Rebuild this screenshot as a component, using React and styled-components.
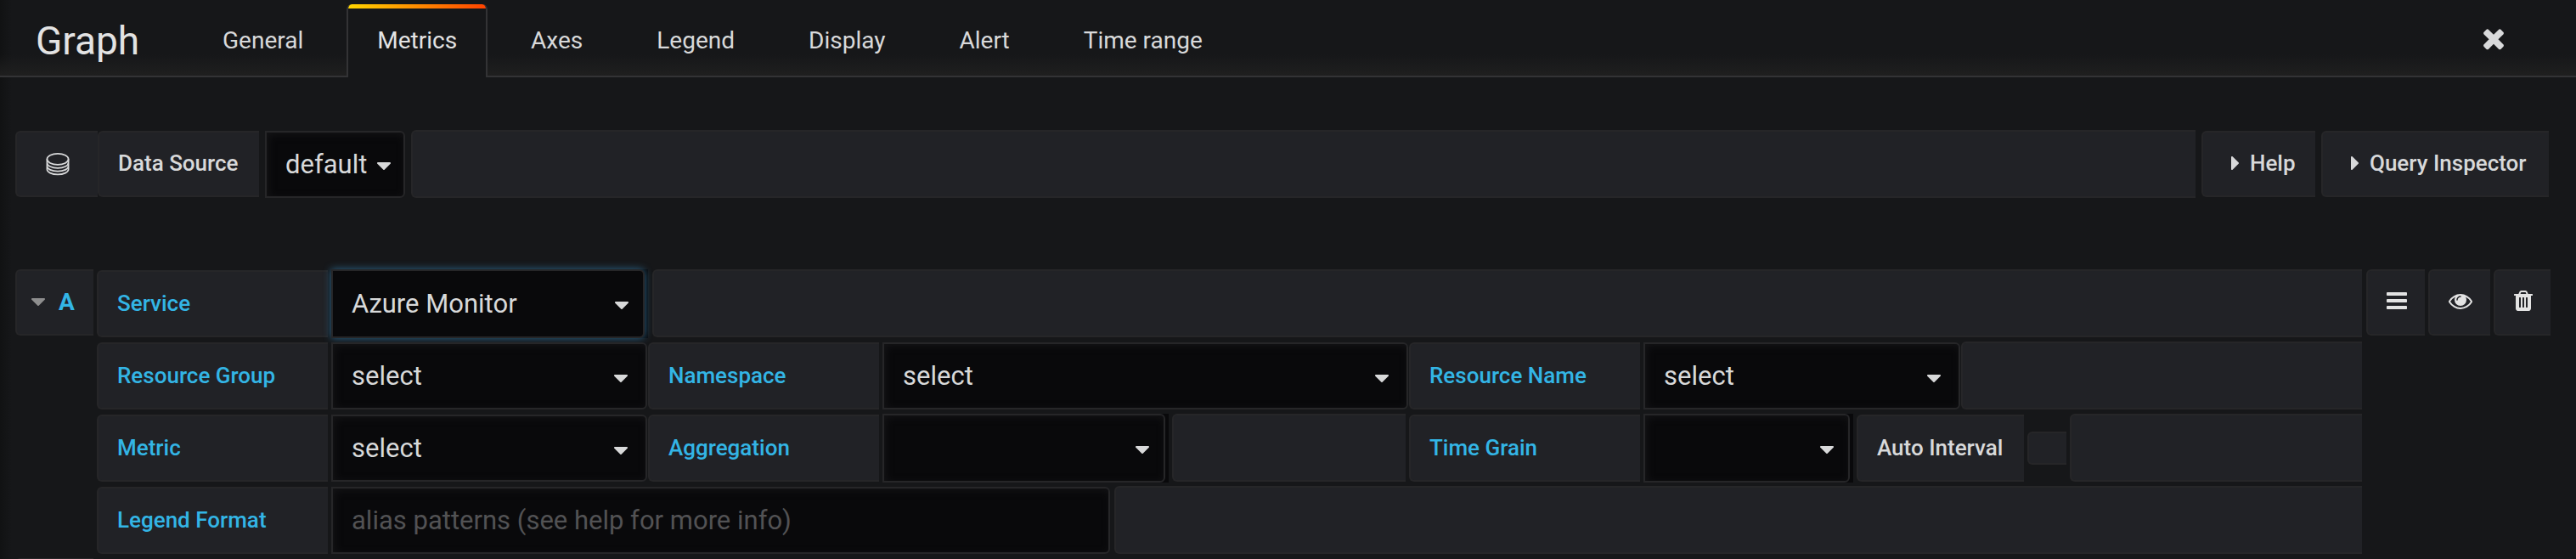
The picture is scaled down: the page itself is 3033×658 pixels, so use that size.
import React from "react";
import styled, { createGlobalStyle, css } from "styled-components";

const GlobalStyle = createGlobalStyle`
  *, *::before, *::after { box-sizing: border-box; }
  html, body { margin: 0; background: #161719; }
  body, button, input, select { font-family: Roboto, "Liberation Sans", sans-serif; color: #d8d9da; }
`;

const colors = {
  panel: "#161719",
  cell: "#212226",
  line: "#262628",
  field: "#09090b",
  text: "#d8d9da",
  blue: "#33b5e5",
};

const Editor = styled.main`
  height: 100vh;
  overflow: hidden;
  background: linear-gradient(90deg, #111213 0, ${colors.panel} 14px);
`;

const Header = styled.header`
  display: flex;
  align-items: stretch;
  height: 91px;
  padding: 5px 67px 0 42px;
  background: linear-gradient(180deg, transparent 64px, #1f1f1f 89px);
  box-shadow: inset 0 -2px 0 #333335;
`;

const Title = styled.h1`
  margin: 0;
  width: 184px;
  font-size: 46px;
  line-height: 86px;
  font-weight: 400;
  color: #e3e3e3;
`;

const Tabs = styled.nav`
  display: flex;
  flex: 1;
  gap: 15px;
`;

const Tab = styled.a`
  padding: 0 34px;
  border: 2px solid transparent;
  border-width: 0 2px;
  font-size: 28px;
  line-height: 86px;
  color: ${colors.text};
  text-decoration: none;
  white-space: nowrap;
  ${(p) =>
    p.$active &&
    css`
      border-color: #333335;
      border-radius: 6px 6px 0 0;
      color: #e3e3e3;
      background: linear-gradient(90deg, #ffd500 0, #ff4400 99%, #ff4400 100%) 0 0 / 100% 5px no-repeat,
        ${colors.panel};
    `}
`;

const IconButton = styled.button`
  display: flex;
  align-items: center;
  padding: 0 12px 6px 0;
  border: 0;
  background: none;
  cursor: pointer;
`;

const Content = styled.div`
  padding: 62px 30px 0 18px;
`;

const Bar = styled.div`
  display: flex;
  align-items: center;
  gap: 7px;
  padding-right: 2px;
`;

const Query = styled.section`
  display: flex;
  align-items: flex-start;
  gap: 4px;
  margin-top: 84px;
`;

const Rows = styled.div`
  flex: 1;
  display: grid;
  gap: 5px;
`;

const Row = styled.div`
  display: flex;
  align-items: flex-end;
  gap: 4px;
  height: 80px;
`;

const Actions = styled.div`
  display: flex;
  gap: 4px;
  padding-left: 1px;
`;

const cell = css`
  background: ${colors.cell};
  border: 2px solid ${colors.line};
  border-right: 0;
  border-radius: 6px 0 0 6px;
`;

const Grow = styled.div`
  ${cell}
  flex: ${(p) => (p.$width ? `0 0 ${p.$width}px` : "1")};
  height: 80px;
`;

const NextQuery = styled.div`
  ${cell}
  width: 92px;
  height: 78px;
  margin-top: 5px;
`;

const labelText = css`
  font-size: 26px;
  line-height: 74px;
  font-weight: 500;
  white-space: nowrap;
`;

const Label = styled.label`
  ${cell}
  ${labelText}
  flex: none;
  width: ${(p) => p.$width}px;
  height: 79px;
  padding: 0 22px;
  color: ${(p) => (p.$plain ? colors.text : colors.blue)};
  ${(p) =>
    p.$bar &&
    css`
      height: 78px;
      line-height: 72px;
    `}
`;

const SourceGroup = styled.div`
  display: flex;
`;

const IconCell = styled.span`
  ${cell}
  display: flex;
  align-items: center;
  justify-content: center;
  width: 97px;
  height: 78px;
`;

const CellButton = styled.button`
  ${cell}
  ${labelText}
  display: flex;
  flex: none;
  align-items: center;
  justify-content: ${(p) => (p.$center ? "center" : "flex-start")};
  gap: 3px;
  width: ${(p) => p.$width}px;
  height: 78px;
  padding: ${(p) => (p.$center ? "0 0 4px" : "0 0 2px 24px")};
  color: ${colors.text};
  cursor: pointer;
`;

const Toggle = styled.button`
  ${cell}
  display: flex;
  align-items: center;
  gap: 10px;
  width: 92px;
  height: 78px;
  padding: 0 0 2px 11px;
  font-size: 28px;
  font-weight: 700;
  color: ${colors.blue};
  cursor: pointer;
`;

const field = css`
  width: 100%;
  height: 79px;
  padding: 0 22px;
  border: 2px solid ${colors.line};
  border-radius: 0 6px 6px 0;
  background: ${colors.field};
  box-shadow: inset 2px 2px 10px #151517;
  font-size: 31px;
  color: ${colors.text};
  outline: 0;
`;

const SelectInput = styled.select`
  ${field}
  appearance: none;
`;

const SelectBox = styled.span`
  display: grid;
  flex: none;
  align-items: center;
  width: ${(p) => p.$width}px;
  margin-right: ${(p) => (p.$flush ? "-3px" : "0")};
  > * { grid-area: 1 / 1; }
  > svg {
    justify-self: end;
    margin: ${(p) => (p.$backed ? "2px" : "4px")} ${(p) => (p.$compact ? "11px" : "17px")} 0 0;
    pointer-events: none;
  }
  ${(p) =>
    p.$backed &&
    css`
      margin-bottom: -1px;
      background: ${colors.field};
      ${SelectInput} {
        width: calc(100% - 4px);
        height: 81px;
      }
    `}
  ${(p) =>
    p.$focused &&
    css`
      margin-right: 1px;
      ${SelectInput} { box-shadow: 0 0 10px #2b668c; }
    `}
`;

const TextInput = styled.input`
  ${field}
  flex: none;
  width: 917px;
  margin-right: 1px;
  &::placeholder { color: #525254; opacity: 1; }
`;

const Check = styled.input`
  ${cell}
  appearance: none;
  flex: none;
  align-self: center;
  margin: 0;
  width: 46px;
  height: 39px;
`;

const paths = {
  down: "M1408 704q0 26-19 45l-448 448q-19 19-45 19t-45-19l-448-448q-19-19-19-45t19-45 45-19h896q26 0 45 19t19 45z",
  right: "M1152 896q0 26-19 45l-448 448q-19 19-45 19t-45-19-19-45v-896q0-26 19-45t45-19 45 19l448 448q19 19 19 45z",
  close: "M1490 1322q0 40-28 68l-136 136q-28 28-68 28t-68-28l-294-294-294 294q-28 28-68 28t-68-28l-136-136q-28-28-28-68t28-68l294-294-294-294q-28-28-28-68t28-68l136-136q28-28 68-28t68 28l294 294 294-294q28-28 68-28t68 28l136 136q28 28 28 68t-28 68l-294 294 294 294q28 28 28 68z",
  bars: "M1664 1344v128q0 26-19 45t-45 19h-1408q-26 0-45-19t-19-45v-128q0-26 19-45t45-19h1408q26 0 45 19t19 45zm0-512v128q0 26-19 45t-45 19h-1408q-26 0-45-19t-19-45v-128q0-26 19-45t45-19h1408q26 0 45 19t19 45zm0-512v128q0 26-19 45t-45 19h-1408q-26 0-45-19t-19-45v-128q0-26 19-45t45-19h1408q26 0 45 19t19 45z",
  eye: "M1664 960q-152-236-381-353 61 104 61 225 0 185-131.5 316.5t-316.5 131.5-316.5-131.5-131.5-316.5q0-121 61-225-229 117-381 353 133 205 333.5 326.5t434.5 121.5 434.5-121.5 333.5-326.5zm-720-384q0-20-14-34t-34-14q-125 0-214.5 89.5t-89.5 214.5q0 20 14 34t34 14 34-14 14-34q0-86 61-147t147-61q20 0 34-14t14-34zm848 384q0 34-20 69-140 230-376.5 368.5t-499.5 138.5-499.5-139-376.5-368q-20-35-20-69t20-69q140-229 376.5-368t499.5-139 499.5 139 376.5 368q20 35 20 69z",
  trash: "M704 1376v-704q0-14-9-23t-23-9h-64q-14 0-23 9t-9 23v704q0 14 9 23t23 9h64q14 0 23-9t9-23zm256 0v-704q0-14-9-23t-23-9h-64q-14 0-23 9t-9 23v704q0 14 9 23t23 9h64q14 0 23-9t9-23zm256 0v-704q0-14-9-23t-23-9h-64q-14 0-23 9t-9 23v704q0 14 9 23t23 9h64q14 0 23-9t9-23zm-544-992h448l-48-117q-7-9-17-11h-317q-10 2-17 11zm928 32v64q0 14-9 23t-23 9h-96v948q0 83-47 143.5t-113 60.5h-832q-66 0-113-58.5t-47-141.5v-952h-96q-14 0-23-9t-9-23v-64q0-14 9-23t23-9h309l70-167q15-37 54-63t79-26h320q40 0 79 26t54 63l70 167h309q14 0 23 9t9 23z",
};

const Glyph = styled.svg`
  flex: none;
`;

const Icon = ({ name, size = 28, color = colors.text }) => (
  <Glyph width={size} height={size} viewBox="0 0 1792 1792" fill={color} aria-hidden="true">
    <path d={paths[name]} />
  </Glyph>
);

const DatabaseIcon = () => (
  <Glyph width="28" height="28" viewBox="0 0 28 28" fill="none" stroke={colors.text} strokeWidth="1.7" aria-hidden="true">
    <ellipse cx="14" cy="8.300" rx="12.600" ry="6.500" />
    <path d="M1.400 8.300v4.200c0 3.600 5.600 6.400 12.600 6.400s12.600-2.800 12.600-6.400V8.300" />
    <path d="M1.400 13.500v3c0 3.500 5.600 6.100 12.600 6.100s12.600-2.600 12.600-6.100v-3" />
    <path d="M1.400 17.500v2.800c0 3.400 5.600 6.100 12.600 6.100s12.600-2.700 12.600-6.100v-2.800" />
  </Glyph>
);

const Select = ({ id, width, value = "", ...variant }) => (
  <SelectBox
    $width={width}
    $flush={variant.flush}
    $backed={variant.backed}
    $focused={variant.focused}
    $compact={variant.compact}
  >
    <SelectInput id={id} defaultValue={value}>
      <option value={value}>{value}</option>
    </SelectInput>
    <Icon name="down" />
  </SelectBox>
);

const tabs = ["General", "Metrics", "Axes", "Legend", "Display", "Alert", "Time range"];

export default function App() {
  return (
    <Editor>
      <GlobalStyle />
      <Header>
        <Title>Graph</Title>
        <Tabs>
          {tabs.map((t) => (
            <Tab key={t} href="#" $active={t === "Metrics"}>{t}</Tab>
          ))}
        </Tabs>
        <IconButton aria-label="Close"><Icon name="close" size={36} /></IconButton>
      </Header>

      <Content>
        <Bar>
          <SourceGroup>
            <IconCell><DatabaseIcon /></IconCell>
            <Label htmlFor="source" $plain $bar $width={190}>Data Source</Label>
          </SourceGroup>
          <Select id="source" width={165} value="default" compact />
          <Grow />
          <CellButton $width={134}><Icon name="right" />Help</CellButton>
          <CellButton $width={268}><Icon name="right" />Query Inspector</CellButton>
        </Bar>

        <Query>
          <Toggle><Icon name="down" color="#8e8e8e" />A</Toggle>
          <Rows>
            <Row>
              <Label htmlFor="service" $width={272}>Service</Label>
              <Select id="service" width={373} value="Azure Monitor" backed focused />
              <Grow />
            </Row>
            <Row>
              <Label htmlFor="group" $width={272}>Resource Group</Label>
              <Select id="group" width={372} value="select" flush />
              <Label htmlFor="namespace" $width={272}>Namespace</Label>
              <Select id="namespace" width={619} value="select" flush />
              <Label htmlFor="resource" $width={272}>Resource Name</Label>
              <Select id="resource" width={373} value="select" flush />
              <Grow />
            </Row>
            <Row>
              <Label htmlFor="metric" $width={272}>Metric</Label>
              <Select id="metric" width={372} value="select" flush />
              <Label htmlFor="aggregation" $width={272}>Aggregation</Label>
              <Select id="aggregation" width={337} backed />
              <Grow $width={275} />
              <Label htmlFor="grain" $width={272}>Time Grain</Label>
              <Select id="grain" width={247} backed />
              <Label htmlFor="auto" $plain $width={197}>Auto Interval</Label>
              <Check id="auto" type="checkbox" />
              <Grow />
            </Row>
            <Row>
              <Label htmlFor="legend" $width={272}>Legend Format</Label>
              <TextInput id="legend" placeholder="alias patterns (see help for more info)" />
              <Grow />
            </Row>
          </Rows>
          <Actions>
            <CellButton $center $width={69} aria-label="Query menu"><Icon name="bars" color="#e3e3e3" /></CellButton>
            <CellButton $center $width={73} aria-label="Toggle visibility"><Icon name="eye" color="#e3e3e3" /></CellButton>
            <CellButton $center $width={67} aria-label="Remove query"><Icon name="trash" color="#e3e3e3" /></CellButton>
          </Actions>
        </Query>
        <NextQuery />
      </Content>
    </Editor>
  );
}
